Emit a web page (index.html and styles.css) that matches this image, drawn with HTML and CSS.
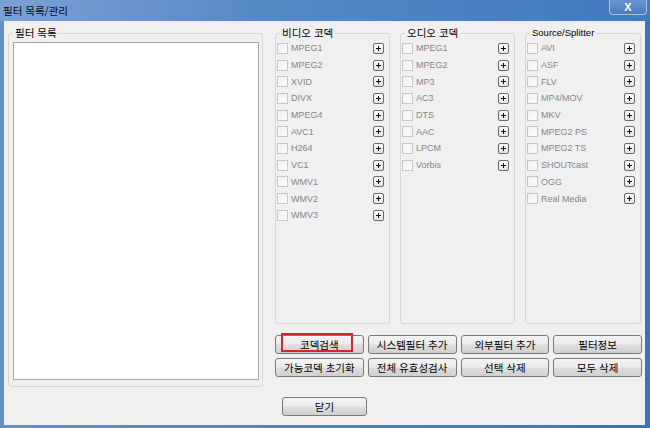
FILE: index.html
```html
<!DOCTYPE html>
<html lang="ko">
<head>
  <meta charset="UTF-8">
  <title>필터 목록/관리</title>
  <link rel="stylesheet" href="styles.css">
</head>
<body>
  <div class="window">
    <div class="title-bar">
      <span class="title">필터 목록/관리</span>
      <div class="close-button">X</div>
    </div>

    <div class="client">
      <fieldset class="group list-group">
        <legend>필터 목록</legend>
        <div class="listbox"></div>
      </fieldset>

      <div class="right-side">
        <div class="codec-groups">
          <fieldset class="group codec-group">
            <legend>비디오 코덱</legend>
            <div class="item"><span class="check"></span><span class="name">MPEG1</span><span class="plus"></span></div>
            <div class="item"><span class="check"></span><span class="name">MPEG2</span><span class="plus"></span></div>
            <div class="item"><span class="check"></span><span class="name">XVID</span><span class="plus"></span></div>
            <div class="item"><span class="check"></span><span class="name">DIVX</span><span class="plus"></span></div>
            <div class="item"><span class="check"></span><span class="name">MPEG4</span><span class="plus"></span></div>
            <div class="item"><span class="check"></span><span class="name">AVC1</span><span class="plus"></span></div>
            <div class="item"><span class="check"></span><span class="name">H264</span><span class="plus"></span></div>
            <div class="item"><span class="check"></span><span class="name">VC1</span><span class="plus"></span></div>
            <div class="item"><span class="check"></span><span class="name">WMV1</span><span class="plus"></span></div>
            <div class="item"><span class="check"></span><span class="name">WMV2</span><span class="plus"></span></div>
            <div class="item"><span class="check"></span><span class="name">WMV3</span><span class="plus"></span></div>
          </fieldset>

          <fieldset class="group codec-group">
            <legend>오디오 코덱</legend>
            <div class="item"><span class="check"></span><span class="name">MPEG1</span><span class="plus"></span></div>
            <div class="item"><span class="check"></span><span class="name">MPEG2</span><span class="plus"></span></div>
            <div class="item"><span class="check"></span><span class="name">MP3</span><span class="plus"></span></div>
            <div class="item"><span class="check"></span><span class="name">AC3</span><span class="plus"></span></div>
            <div class="item"><span class="check"></span><span class="name">DTS</span><span class="plus"></span></div>
            <div class="item"><span class="check"></span><span class="name">AAC</span><span class="plus"></span></div>
            <div class="item"><span class="check"></span><span class="name">LPCM</span><span class="plus"></span></div>
            <div class="item"><span class="check"></span><span class="name">Vorbis</span><span class="plus"></span></div>
          </fieldset>

          <fieldset class="group codec-group">
            <legend class="latin">Source/Splitter</legend>
            <div class="item"><span class="check"></span><span class="name">AVI</span><span class="plus"></span></div>
            <div class="item"><span class="check"></span><span class="name">ASF</span><span class="plus"></span></div>
            <div class="item"><span class="check"></span><span class="name">FLV</span><span class="plus"></span></div>
            <div class="item"><span class="check"></span><span class="name">MP4/MOV</span><span class="plus"></span></div>
            <div class="item"><span class="check"></span><span class="name">MKV</span><span class="plus"></span></div>
            <div class="item"><span class="check"></span><span class="name">MPEG2 PS</span><span class="plus"></span></div>
            <div class="item"><span class="check"></span><span class="name">MPEG2 TS</span><span class="plus"></span></div>
            <div class="item"><span class="check"></span><span class="name">SHOUTcast</span><span class="plus"></span></div>
            <div class="item"><span class="check"></span><span class="name">OGG</span><span class="plus"></span></div>
            <div class="item"><span class="check"></span><span class="name">Real Media</span><span class="plus"></span></div>
          </fieldset>
        </div>

        <div class="button-grid">
          <div class="btn">코덱검색<span class="mark"></span></div>
          <div class="btn">시스템필터 추가</div>
          <div class="btn">외부필터 추가</div>
          <div class="btn">필터정보</div>
          <div class="btn">가능코덱 초기화</div>
          <div class="btn">전체 유효성검사</div>
          <div class="btn">선택 삭제</div>
          <div class="btn">모두 삭제</div>
        </div>

        <div class="btn close-btn">닫기</div>
      </div>
    </div>
  </div>
</body>
</html>
```

FILE: styles.css
```css
body {
  margin: 0;
  width: 650px;
  height: 428px;
  overflow: hidden;
  font-family: "Noto Sans CJK KR", "Liberation Sans", sans-serif;
}

.window {
  width: 650px;
  height: 428px;
  display: flex;
  flex-direction: column;
  box-sizing: border-box;
  background: linear-gradient(to right, #6491ca, #4f82c4 50%, #3a73bd);
}

.title-bar {
  height: 21px;
  display: flex;
  align-items: center;
  padding-left: 3px;
  background: linear-gradient(to right, #7aa1d3, #5688c6 40%, #4379bf);
  flex-shrink: 0;
}

.title-bar .title {
  font-size: 10.5px;
  line-height: 14px;
  color: #0a0a0a;
  flex-grow: 1;
}

.close-button {
  align-self: flex-start;
  width: 38px;
  height: 15px;
  margin-right: 3px;
  box-sizing: border-box;
  border: 1px solid #a9c3e4;
  border-top: none;
  border-radius: 0 0 4px 4px;
  background: linear-gradient(#6894cd, #4a7cbf);
  color: white;
  font-family: "Liberation Sans", sans-serif;
  font-size: 11px;
  font-weight: bold;
  line-height: 14px;
  text-align: center;
}

.client {
  flex: 1;
  margin: 0 5px 3px 4px;
  padding: 5px 3px 0 4px;
  background-color: #f0f0f0;
  display: flex;
  gap: 12px;
}

.group {
  margin: 0;
  box-sizing: border-box;
  border: 1px solid #d7d7d7;
  border-radius: 3px;
}

.group legend {
  padding: 0 2px;
  font-size: 10.5px;
  line-height: 14px;
  color: #000;
}

.group legend.latin {
  font-family: "Liberation Sans", sans-serif;
  font-size: 9.5px;
}

.list-group {
  width: 255px;
  height: 361px;
  padding: 2px 3px 0 4px;
}

.list-group legend {
  margin-left: 0;
}

.listbox {
  width: 246px;
  height: 338px;
  box-sizing: border-box;
  border: 1px solid #a5a5a5;
  background-color: white;
}

.right-side {
  width: 367px;
  display: flex;
  flex-direction: column;
}

.codec-groups {
  display: flex;
  gap: 10px;
}

.codec-group {
  width: 115px;
  height: 298px;
  padding: 0 5px 0 1px;
}

.codec-group:last-child {
  width: 116px;
}

.codec-group legend {
  margin-left: 3px;
}

.item {
  height: 16.7px;
  display: flex;
  align-items: center;
}

.check {
  width: 11px;
  height: 11px;
  box-sizing: border-box;
  border: 1px solid #c6c6c6;
  background: linear-gradient(135deg, #f2f2f2, #fbfbfb);
  flex-shrink: 0;
}

.name {
  margin-left: 3px;
  font-family: "Liberation Sans", sans-serif;
  font-size: 9px;
  color: #878787;
  white-space: nowrap;
}

.plus {
  position: relative;
  margin-left: auto;
  width: 11px;
  height: 11px;
  box-sizing: border-box;
  border: 1px solid #6a6a6a;
  border-radius: 2px;
  background: linear-gradient(#fdfdfd, #e4e4e4);
  flex-shrink: 0;
}

.plus::before,
.plus::after {
  content: "";
  position: absolute;
  background-color: #111;
}

.plus::before {
  left: 2px;
  top: 4px;
  width: 5px;
  height: 1px;
}

.plus::after {
  left: 4px;
  top: 2px;
  width: 1px;
  height: 5px;
}

.button-grid {
  margin-top: 11px;
  display: grid;
  grid-template-columns: repeat(4, 1fr);
  gap: 4px;
}

.btn {
  position: relative;
  height: 19px;
  box-sizing: border-box;
  border: 1px solid #7a7a7a;
  border-radius: 3px;
  background: linear-gradient(#f4f4f4, #ebebeb 48%, #dedede 52%, #d0d0d0);
  display: flex;
  align-items: center;
  justify-content: center;
  font-size: 10.5px;
  color: #000;
  white-space: nowrap;
}

.mark {
  position: absolute;
  left: 5px;
  top: -3px;
  width: 72px;
  height: 19px;
  box-sizing: border-box;
  border: 2px solid #d7262b;
}

.close-btn {
  width: 85px;
  margin-top: 20px;
  margin-left: 7px;
}
```
